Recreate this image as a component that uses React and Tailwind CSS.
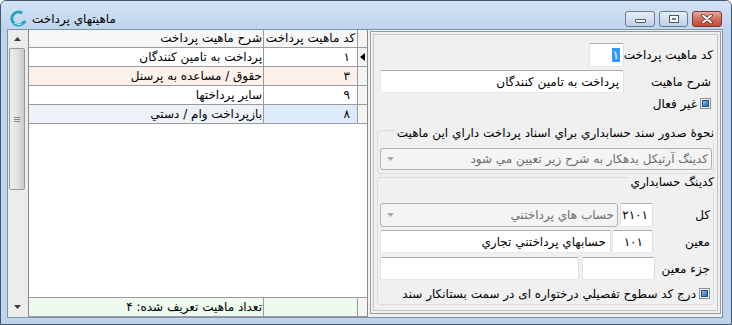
import React from "react";

const inputCls =
  "bg-white border border-[#abadb3] border-l-[#e2e3ea] border-r-[#dbdfe6] border-b-[#e3e9ef] rounded-[2px]";

function Logo() {
  return (
    <svg width="17" height="17" viewBox="0 0 17 17">
      <path d="M11 2.5 A6.5 6.5 0 1 0 13.5 12.5" fill="none" stroke="#21a3c4" strokeWidth="3" strokeLinecap="round" />
      <circle cx="14.5" cy="12" r="1.6" fill="#21a3c4" />
      <path d="M4 13 Q8 15.5 12 14" fill="none" stroke="#c9e7f1" strokeWidth="1" />
    </svg>
  );
}

function Check() {
  return (
    <span className="inline-flex w-[11px] h-[11px] border border-[#8e8f8f] bg-[#f4f4f4] items-center justify-center shrink-0">
      <span className="w-[7px] h-[7px] border border-[#1c4f8a] bg-gradient-to-br from-[#8cc0f0] to-[#2a66b0]" />
    </span>
  );
}

function DownArrow({ color = "#9a9a9a" }) {
  return (
    <svg width="7" height="4" viewBox="0 0 7 4">
      <path d="M0 0 L7 0 L3.5 4 Z" fill={color} />
    </svg>
  );
}

function Combo({ text, className = "" }) {
  return (
    <div
      className={
        "flex items-center justify-between h-full border border-[#adb2b5] rounded-[3px] bg-[#f4f4f4] text-[#6d6d6d] " +
        className
      }
      dir="rtl"
    >
      <span className="pr-[3px] whitespace-nowrap">{text}</span>
      <span className="pl-[6px] flex items-center">
        <DownArrow color="#a8a8a8" />
      </span>
    </div>
  );
}

const rows = [
  { code: "۱", desc: "پرداخت به تامین کنندگان", bg: "bg-white", cbg: "bg-white", cur: true },
  { code: "۳", desc: "حقوق / مساعده به پرسنل", bg: "bg-[#fdf1ec]", cbg: "bg-[#fdf1ec]" },
  { code: "۹", desc: "سایر پرداختها", bg: "bg-white", cbg: "bg-white" },
  { code: "۸", desc: "بازپرداخت وام / دستي", bg: "bg-[#edf2f9]", cbg: "bg-[#dcebfb]" },
];

function Grid() {
  return (
    <div className="w-[340px] h-full flex flex-col bg-white border-l border-r border-[#8a8a8a]">
      <div className="flex h-[18px] border-b border-[#9b9b9b] bg-[#f7f7f7]">
        <div className="w-[235px] border-r border-[#9b9b9b] text-right pr-[1px] leading-[17px] whitespace-nowrap" dir="rtl">
          شرح ماهيت پرداخت
        </div>
        <div className="w-[94px] border-r border-[#9b9b9b] text-center leading-[17px] whitespace-nowrap" dir="rtl">
          کد ماهيت پرداخت
        </div>
        <div className="flex-1 bg-[#f4f4f4]" />
      </div>
      {rows.map((r, i) => (
        <div key={i} className="flex h-[19px] border-b border-[#9b9b9b]">
          <div className={"w-[235px] border-r border-[#9b9b9b] text-right pr-[1px] leading-[18px] whitespace-nowrap " + r.bg} dir="rtl">
            {r.desc}
          </div>
          <div className={"w-[94px] border-r border-[#9b9b9b] text-right pr-[7px] leading-[18px] " + r.cbg} dir="rtl">
            {r.code}
          </div>
          <div className="flex-1 bg-[#f4f4f4] flex items-center justify-center">
            {r.cur && (
              <svg width="5" height="8" viewBox="0 0 5 8">
                <path d="M5 0 L0 4 L5 8 Z" fill="#000" />
              </svg>
            )}
          </div>
        </div>
      ))}
      <div className="flex-1" />
      <div className="flex h-[20px] border-t border-b border-[#9b9b9b]">
        <div className="w-[235px] border-r border-[#9b9b9b] text-right pr-[1px] leading-[18px] bg-[#eefaee] whitespace-nowrap" dir="rtl">
          تعداد ماهيت تعريف شده: ۴
        </div>
        <div className="w-[94px] border-r border-[#9b9b9b] bg-[#eefaee]" />
        <div className="flex-1 bg-[#f4f4f4]" />
      </div>
    </div>
  );
}

function Scrollbar() {
  return (
    <div className="w-[20px] h-full flex flex-col bg-[#ececec]">
      <div className="h-[18px] flex items-center justify-center pr-[2px]">
        <svg width="7" height="4" viewBox="0 0 7 4">
          <path d="M0 4 L7 4 L3.5 0 Z" fill="#3c3c3c" />
        </svg>
      </div>
      <div className="h-[142px] w-[16px] ml-[1px] rounded-[2px] border border-[#979797] bg-gradient-to-r from-[#eeeeee] via-[#e2e2e2] to-[#c9c9c9] flex items-center justify-center">
        <div className="flex flex-col gap-[1px]">
          <span className="block w-[6px] h-[1px] bg-[#8a8a8a]" />
          <span className="block w-[6px] h-[1px] bg-[#8a8a8a]" />
          <span className="block w-[6px] h-[1px] bg-[#8a8a8a]" />
        </div>
      </div>
      <div className="flex-1" />
      <div className="h-[20px] flex items-center justify-center pr-[2px]">
        <DownArrow color="#3c3c3c" />
      </div>
    </div>
  );
}

function RightPanel() {
  return (
    <div className="ml-[2px] mt-[1px] w-[351px] h-[283px] border border-[#9d9d9d] p-[2px]">
      <div className="w-full h-full border border-[#c6c6c6] flex flex-col" dir="rtl">
        <div className="flex items-center mt-[8px] h-[24px] pr-[4px]">
          <div className="w-[89px] text-right whitespace-nowrap">کد ماهيت پرداخت</div>
          <div className={"w-[35px] h-full flex items-center justify-start pr-[3px] " + inputCls}>
            <span className="bg-[#3399ff] text-white leading-[14px] px-[1px]">۱</span>
          </div>
        </div>
        <div className="flex items-center mt-[3px] h-[23px] pr-[4px]">
          <div className="w-[89px] text-right whitespace-nowrap pr-[2px]">شرح ماهيت</div>
          <div className={"w-[244px] h-full flex items-center pr-[4px] whitespace-nowrap " + inputCls}>
            پرداخت به تامين کنندگان
          </div>
        </div>
        <div className="flex items-center mt-[3px] h-[15px] pr-[6px] gap-[3px]">
          <Check />
          <span className="whitespace-nowrap">غير فعال</span>
        </div>
        <div className="relative mt-[19px] mx-[3px] h-[44px] border border-[#d5dfe5] rounded-[3px]">
          <div className="absolute right-[-1px] top-[-5px] bg-[#f0f0f0] pl-[2px] whitespace-nowrap">
            نحوهٔ صدور سند حسابداري براي اسناد پرداخت داراي اين ماهيت
          </div>
          <div className="mt-[17px] mr-[1px] ml-[2px] h-[22px]">
            <Combo text="کدينگ آرتيکل بدهکار به شرح زير تعيين مي شود" />
          </div>
        </div>
        <div className="relative mt-[3px] mx-[3px] h-[128px] border border-[#d5dfe5] rounded-[3px] flex flex-col">
          <div className="absolute right-[-1px] top-[-3px] bg-[#f0f0f0] pl-[2px] whitespace-nowrap">
            کدينگ حسابداري
          </div>
          <div className="flex mt-[25px] h-[24px] pl-[2px]">
            <div className="w-[60px] pr-[3px] flex items-center">کل</div>
            <div className={"w-[33px] h-full flex items-center pr-[4px] " + inputCls}>۲۱۰۱</div>
            <div className="w-[238px] mr-[2px] h-full">
              <Combo text="حساب هاي  پرداختني" />
            </div>
          </div>
          <div className="flex mt-[3px] h-[23px] pl-[2px]">
            <div className="w-[60px] pr-[3px] flex items-center">معين</div>
            <div className={"w-[41px] h-full flex items-center pr-[9px] " + inputCls}>۱۰۱</div>
            <div className={"w-[231px] mr-[1px] h-full flex items-center pr-[4px] whitespace-nowrap " + inputCls}>
              حسابهاي پرداختني تجاري
            </div>
          </div>
          <div className="flex mt-[4px] h-[23px] pl-[2px]">
            <div className="w-[58px] pr-[3px] flex items-center whitespace-nowrap">جزء معين</div>
            <div className={"w-[73px] h-full " + inputCls} />
            <div className={"w-[199px] mr-[3px] h-full " + inputCls} />
          </div>
          <div className="flex items-center mt-[6px] h-[15px] pr-[3px] gap-[3px]">
            <Check />
            <span className="whitespace-nowrap">درج کد سطوح تفصيلي درختواره ای در سمت بستانکار سند</span>
          </div>
        </div>
      </div>
    </div>
  );
}

function TitleButtons() {
  return (
    <div className="flex gap-[4px] mt-[10px] mr-[9px]">
      <div className="w-[30px] h-[16px] rounded-[3px] border border-[#6b7d94] bg-gradient-to-b from-[#e6eef8] via-[#d2e0ef] to-[#bccfe4] flex items-end justify-center pb-[3px]">
        <span className="block w-[11px] h-[4px] bg-white border border-[#4b5a6c] rounded-[1px]" />
      </div>
      <div className="w-[29px] h-[16px] rounded-[3px] border border-[#6b7d94] bg-gradient-to-b from-[#e6eef8] via-[#d2e0ef] to-[#bccfe4] flex items-center justify-center">
        <span className="block w-[10px] h-[8px] border border-[#4b5a6c] bg-white p-[1px]">
          <span className="block w-full h-full bg-[#6b7d94] border border-white" />
        </span>
      </div>
      <div className="w-[30px] h-[16px] rounded-[3px] border border-[#7c3a33] bg-gradient-to-b from-[#e9a99b] via-[#d2705e] to-[#c04a37] flex items-center justify-center">
        <svg width="12" height="10" viewBox="0 0 12 10">
          <path d="M2 1.5 L10 8.5 M10 1.5 L2 8.5" stroke="#5a2a24" strokeWidth="3.6" strokeLinecap="round" />
          <path d="M2 1.5 L10 8.5 M10 1.5 L2 8.5" stroke="#ffffff" strokeWidth="2" strokeLinecap="round" />
        </svg>
      </div>
    </div>
  );
}

export default function App() {
  return (
    <div className="w-[732px] h-[325px] font-['DejaVu_Sans',sans-serif] text-[12px] leading-[14px] text-black bg-white">
      <div className="w-full h-full flex flex-col rounded-t-[6px] border border-[#42566e] bg-[#bdd4ec] overflow-hidden">
        <div className="h-[28px] flex items-start bg-gradient-to-b from-[#d4e3f4] to-[#bfd5ec]">
          <div className="ml-[9px] mt-[9px] w-[17px] h-[17px]">
            <Logo />
          </div>
          <div className="ml-[5px] mt-[11px] whitespace-nowrap" dir="rtl">
            ماهيتهاي پرداخت
          </div>
          <div className="flex-1" />
          <TitleButtons />
        </div>
        <div className="flex-1 flex pl-[6px] pr-[8px] pb-[6px]">
          <div className="flex-1 flex bg-[#f0f0f0] border border-[#7d93ac]">
            <Scrollbar />
            <Grid />
            <RightPanel />
          </div>
        </div>
      </div>
    </div>
  );
}
